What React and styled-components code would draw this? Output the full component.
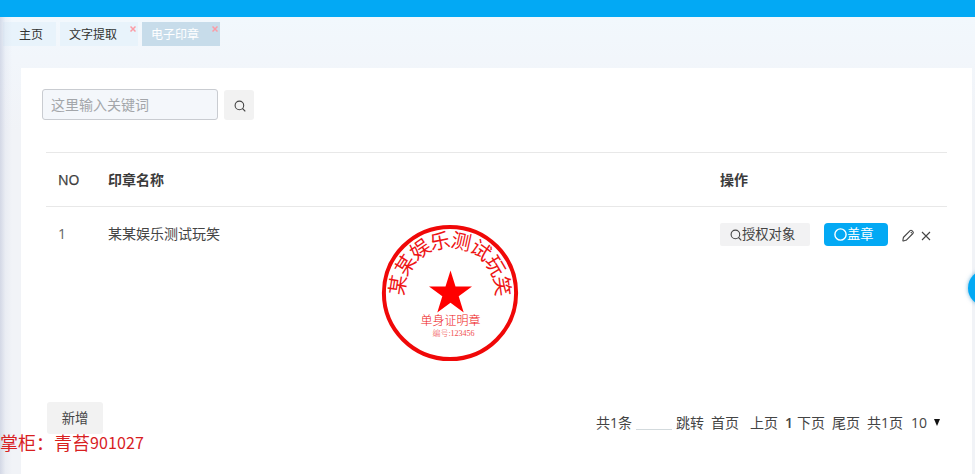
import React from "react";
import styled, { createGlobalStyle } from "styled-components";

const GlobalStyle = createGlobalStyle`
  * { box-sizing: border-box; }
  body {
    margin: 0;
    overflow: hidden;
    font-family: "Open Sans", "Noto Sans CJK SC", sans-serif;
    font-size: 14px;
    color: #444;
  }
  button, input { font: inherit; color: inherit; border: 0; margin: 0; }
`;

const Page = styled.div`
  position: relative;
  width: 975px;
  height: 474px;
  overflow: hidden;
  display: flex;
  flex-direction: column;
  background: linear-gradient(#f2f8fd 17px, #f2f6fb 60px, #f1f3f7 130px, #f1f3f7);
`;

const TopBar = styled.header`
  flex: 0 0 17px;
  background: #03a9f4;
`;

const EdgeShade = styled.div`
  position: absolute;
  left: 0;
  top: 17px;
  bottom: 0;
  width: 12px;
  background: linear-gradient(90deg, rgba(170, 178, 205, 0.42), rgba(210, 216, 232, 0.24) 45%, transparent);
`;

const Tabs = styled.nav`
  display: flex;
  gap: 4px;
  padding: 5px 0 0 3px;
  flex: 0 0 51px;
`;

const Tab = styled.div`
  position: relative;
  width: ${(p) => p.$width}px;
  height: 24px;
  padding-left: ${(p) => p.$inset}px;
  font-size: 12px;
  line-height: 25px;
  white-space: nowrap;
  color: ${(p) => (p.$active ? "#fff" : "#333")};
  background: ${(p) => (p.$active ? "#c7dcea" : "#e8f3fb")};
`;

const TabClose = styled.svg`
  position: absolute;
  right: 2px;
  top: 4px;
  width: 6px;
  height: 6px;
  stroke: #fb9ca6;
  stroke-width: 1.5;
`;

const Card = styled.main`
  flex: 1;
  margin: 0 3px 0 21px;
  padding: 21px 25px 0 21px;
  background: #fff;
`;

const SearchRow = styled.div`
  display: flex;
  align-items: center;
  gap: 6px;
  height: 31px;
`;

const SearchInput = styled.input`
  width: 176px;
  height: 31px;
  padding: 0 8px 1px;
  border: 1px solid #c9ccd1;
  border-radius: 3px;
  background: #f4f7fb;
  outline: 0;
  &::placeholder { color: #a3a6aa; opacity: 1; }
`;

const SearchButton = styled.button`
  display: flex;
  align-items: center;
  justify-content: center;
  width: 30px;
  height: 30px;
  padding: 2px 0 0 1px;
  border-radius: 3px;
  background: #f2f2f2;
`;

const Table = styled.section`
  margin: 32px 0 0 4px;
  border-top: 1px solid #e8e8e8;
`;

const Row = styled.div`
  display: grid;
  grid-template-columns: 50px 272px 340px 1fr;
  padding-left: 12px;
`;

const HeadRow = styled(Row)`
  height: 54px;
  line-height: 54px;
  border-bottom: 1px solid #e8e8e8;
  color: #3b3b3b;
`;

const BodyRow = styled(Row)`
  height: 195px;
  padding-top: 16px;
  line-height: 22px;
`;

const Heading = styled.span`
  font-weight: ${(p) => (p.$light ? 500 : 700)};
  -webkit-text-stroke: ${(p) => (p.$light ? "0.25px currentColor" : "0")};
`;

const IndexCell = styled.span`
  color: #666;
`;

const Actions = styled.div`
  display: flex;
  align-items: flex-start;
`;

const ActionButton = styled.button`
  display: flex;
  align-items: center;
  width: ${(p) => p.$width}px;
  height: 23px;
  padding: 0 0 0 10px;
  margin-right: 14px;
  border-radius: ${(p) => (p.$primary ? 4 : 2)}px;
  font-size: 13.3px;
  line-height: 21px;
  color: ${(p) => (p.$primary ? "#fff" : "#444")};
  background: ${(p) => (p.$primary ? "#03a9f4" : "#f2f2f3")};
  white-space: nowrap;
`;

const Icon = styled.svg`
  flex: none;
  width: ${(p) => p.$size}px;
  height: ${(p) => p.$size}px;
  fill: none;
  stroke: currentColor;
  stroke-width: ${(p) => p.$weight || 1.1};
`;

const RowTools = styled.div`
  display: flex;
  align-items: center;
  gap: 6px;
  padding-top: 6px;
`;

const SealSvg = styled.svg`
  width: 138px;
  height: 138px;
  margin: 0.5px 0 0 0.5px;
  fill: #ee1414;
  font-family: "Liberation Serif", "Noto Sans CJK SC", serif;
  text-anchor: middle;
`;

const Footer = styled.footer`
  display: flex;
  justify-content: space-between;
  align-items: flex-start;
  padding: 0 7px 0 5px;
`;

const AddButton = styled.button`
  width: 56px;
  height: 32px;
  padding: 0 0 2px;
  border-radius: 3px;
  background: #f2f2f2;
  font-size: 13.3px;
`;

const Pager = styled.div`
  display: flex;
  align-items: center;
  height: 22px;
  margin-top: 10px;
  line-height: 22px;
  white-space: nowrap;
`;

const PagerItem = styled.span`
  width: ${(p) => p.$width}px;
  font-weight: ${(p) => (p.$current ? 600 : 400)};
`;

const PageInput = styled.input`
  width: 36px;
  height: 16px;
  margin: 0 4px 2px 0;
  padding: 0;
  border-bottom: 1px solid #d3dadd;
  background: transparent;
`;

const Arrow = styled.svg`
  width: 6px;
  height: 7px;
  margin-top: -2px;
  fill: #111;
`;

const Watermark = styled.div`
  position: absolute;
  left: 0;
  top: 431px;
  display: flex;
  font-family: "Noto Sans CJK SC", sans-serif;
  font-size: 18px;
  line-height: 22px;
  color: #d8201f;
  white-space: nowrap;
`;

const WatermarkDigits = styled.span`
  font-size: 16px;
  letter-spacing: 0.12px;
`;

const FloatingDot = styled.div`
  position: absolute;
  left: 968px;
  top: 270px;
  width: 36px;
  height: 36px;
  border-radius: 50%;
  background: #03a9f4;
  box-shadow: 0 0 4px rgba(3, 120, 190, 0.55);
`;

function CloseMark() {
  return (
    <TabClose viewBox="0 0 6 6">
      <path d="M.5.5l5 5M5.5.5l-5 5" />
    </TabClose>
  );
}

function SearchIcon({ size }) {
  return (
    <Icon $size={size} viewBox="0 0 12 12">
      <circle cx="5.4" cy="5.4" r="4.3" />
      <path d="M8.5 8.5l2.8 2.8" />
    </Icon>
  );
}

function Seal() {
  const step = 23.4;
  return (
    <SealSvg viewBox="-69 -69 138 138">
      <circle r="66.1" fill="none" stroke="#f00808" strokeWidth="4" />
      {[..."某某娱乐测试玩笑"].map((char, i) => (
        <text key={i} fontSize="20" y="-45.5" transform={`rotate(${(i - 3.5) * step + 0.7})`}>
          {char}
        </text>
      ))}
      <polygon
        fill="#ff0000"
        points="0.5,-22.5 5.5,-6.5 22,-6.5 8.7,3.3 13.7,19.5 0.5,9.7 -12.7,19.5 -7.7,3.3 -21,-6.5 -4.5,-6.5"
      />
      <text fontSize="12" x="0.5" y="32" fontWeight="300">单身证明章</text>
      <text fontSize="8" x="3.5" y="43" fontWeight="300" opacity="0.8">编号:123456</text>
    </SealSvg>
  );
}

const pagerItems = [
  { text: "跳转", width: 35 },
  { text: "首页", width: 39 },
  { text: "上页", width: 35 },
  { text: "1", width: 12, current: true },
  { text: "下页", width: 35 },
  { text: "尾页", width: 35 },
  { text: "共1页", width: 44 },
  { text: "10", width: 23 },
];

export default function App() {
  return (
    <>
      <GlobalStyle />
      <Page>
        <TopBar />
        <Tabs>
          <Tab $width={53} $inset={16}>主页</Tab>
          <Tab $width={78} $inset={9}>文字提取<CloseMark /></Tab>
          <Tab $width={78} $inset={9} $active>电子印章<CloseMark /></Tab>
        </Tabs>
        <Card>
          <SearchRow>
            <SearchInput placeholder="这里输入关键词" />
            <SearchButton aria-label="搜索"><SearchIcon size={12} /></SearchButton>
          </SearchRow>
          <Table>
            <HeadRow>
              <Heading $light>NO</Heading>
              <Heading>印章名称</Heading>
              <span />
              <Heading>操作</Heading>
            </HeadRow>
            <BodyRow>
              <IndexCell>1</IndexCell>
              <span>某某娱乐测试玩笑</span>
              <Seal />
              <Actions>
                <ActionButton $width={90}><SearchIcon size={12} />授权对象</ActionButton>
                <ActionButton $width={64} $primary>
                  <Icon $size={13} $weight={1.4} viewBox="0 0 13 13"><circle cx="6.5" cy="6.5" r="5.6" /></Icon>
                  盖章
                </ActionButton>
                <RowTools>
                  <Icon $size={13} viewBox="0 0 13 13">
                    <path d="M1.4 12q-.6 0-.5-.7l.4-2.4q.1-.5.5-.9l6.3-6.3q.9-.8 1.8 0l1 1q.9.9 0 1.8l-6.3 6.3q-.4.4-.9.5zM8.8 3.1l1 1" />
                  </Icon>
                  <Icon $size={10} viewBox="0 0 10 10"><path d="M1 1l8 8M9 1l-8 8" /></Icon>
                </RowTools>
              </Actions>
            </BodyRow>
          </Table>
          <Footer>
            <AddButton>新增</AddButton>
            <Pager>
              <PagerItem $width={40}>共1条</PagerItem>
              <PageInput aria-label="页码" />
              {pagerItems.map((item) => (
                <PagerItem key={item.text} $width={item.width} $current={item.current}>{item.text}</PagerItem>
              ))}
              <Arrow viewBox="0 0 6 7"><path d="M0 0h6L3 7z" /></Arrow>
            </Pager>
          </Footer>
        </Card>
        <EdgeShade />
        <FloatingDot />
        <Watermark>掌柜：青苔<WatermarkDigits>901027</WatermarkDigits></Watermark>
      </Page>
    </>
  );
}
